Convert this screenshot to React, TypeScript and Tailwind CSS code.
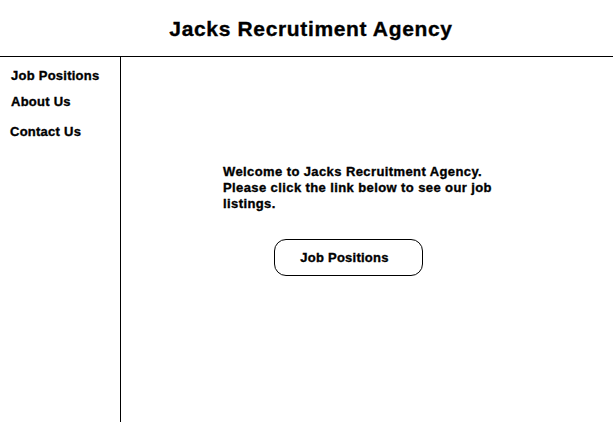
export default function App() {
  return (
    <div className="w-[613px] h-[422px] bg-white text-black overflow-hidden font-['Liberation_Sans',Arial,sans-serif] font-bold flex flex-col [-webkit-text-stroke:0.35px_black]">
      <header className="h-[57px] flex items-center justify-center border-b border-black">
        <h1 className="text-[21px] leading-none mt-[0px] ml-[9px] tracking-[0.65px]">Jacks Recrutiment Agency</h1>
      </header>
      <div className="flex flex-1">
        <nav className="w-[121px] border-r border-black flex flex-col text-[13px] leading-none tracking-[0.25px]">
          <a className="ml-[11px] mt-[12px]">Job Positions</a>
          <a className="ml-[11px] mt-[13px]">About Us</a>
          <a className="ml-[10px] mt-[17px]">Contact Us</a>
        </nav>
        <main className="flex-1 flex flex-col">
          <p className="ml-[102px] mt-[107px] w-[290px] text-[13px] leading-[16px] tracking-[0.4px]">
            Welcome to Jacks Recruitment Agency. Please click the link below to see our job listings.
          </p>
          <button className="ml-[153px] mt-[27px] w-[149px] h-[37px] border border-black rounded-[12px] text-[13px] pr-[8px] font-bold tracking-[0.25px]">
            Job Positions
          </button>
        </main>
      </div>
    </div>
  );
}
